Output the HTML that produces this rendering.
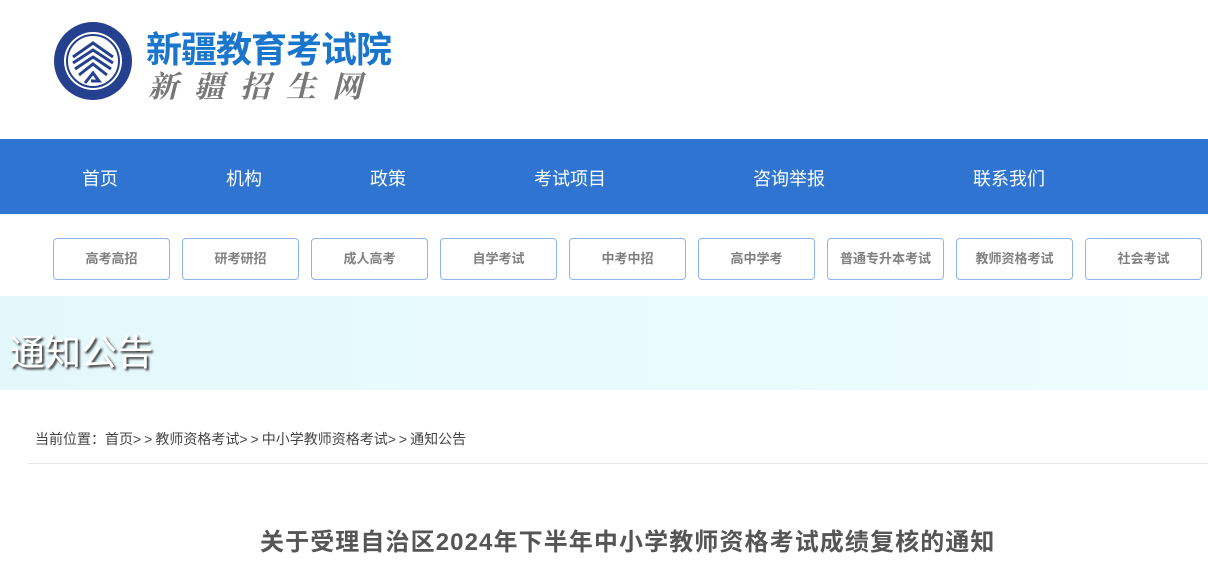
<!DOCTYPE html>
<html><head><meta charset="utf-8"><style>
body{margin:0;width:1208px;height:561px;overflow:hidden;background:#fff;font-family:"Liberation Sans","Noto Sans CJK SC",sans-serif;position:relative}
.a{position:absolute;white-space:nowrap}
.nav{position:absolute;left:0;top:139px;width:1208px;height:75px;background:#2f74d0}
.nav span{position:absolute;top:26px;color:#fff;font-size:18px;transform:translateX(-50%)}
.btn{position:absolute;top:238px;width:115px;height:40px;border:1px solid #8cb4f0;border-radius:4px;text-align:center;line-height:40px;font-size:13px;font-weight:bold;color:#808080}
.g{letter-spacing:3px}
</style></head><body>
<svg class="a" style="left:53px;top:21px" width="80" height="80" viewBox="0 0 80 80">
<circle cx="40" cy="40" r="39" fill="#24408f"/><circle cx="40" cy="40" r="29" fill="#fff"/><circle cx="40" cy="40" r="26" fill="none" stroke="#24408f" stroke-width="2"/>
<path d="M20 36 L40 22 L60 36 M20 42 L40 29 L60 42 M22 48 L40 36 L58 48 M26 54 L40 43 L54 54" fill="none" stroke="#24408f" stroke-width="3"/>
<path d="M32 62 L40 52 L46 60 L38 60" fill="none" stroke="#24408f" stroke-width="3"/>
</svg>
<div class="a" style="left:146px;top:21px;font-size:36px;font-weight:bold;color:#1a76cc;letter-spacing:-1px">新疆教育考试院</div>
<div class="a" style="left:148px;top:62px;font-size:30px;color:#777;letter-spacing:16px;font-family:'Noto Serif CJK SC',serif;font-weight:bold;font-style:italic">新疆招生网</div>
<div class="nav"><span style="left:100px">首页</span><span style="left:244px">机构</span><span style="left:388px">政策</span><span style="left:570px">考试项目</span><span style="left:789px">咨询举报</span><span style="left:1009px">联系我们</span></div>
<div class="btn" style="left:53px">高考高招</div>
<div class="btn" style="left:182px">研考研招</div>
<div class="btn" style="left:311px">成人高考</div>
<div class="btn" style="left:440px">自学考试</div>
<div class="btn" style="left:569px">中考中招</div>
<div class="btn" style="left:698px">高中学考</div>
<div class="btn" style="left:827px">普通专升本考试</div>
<div class="btn" style="left:956px">教师资格考试</div>
<div class="btn" style="left:1085px">社会考试</div>
<div class="a" style="left:0;top:296px;width:1208px;height:94px;background:linear-gradient(90deg,#e4f8fc,#eefdff)"></div>
<div class="a" style="left:9px;top:324px;font-size:36px;color:#fff;text-shadow:2px 2px 2px #333">通知公告</div>
<div class="a" style="left:35px;top:429px;font-size:14px;color:#444">当前位置：首页<span class="g">&gt;&gt;</span>教师资格考试<span class="g">&gt;&gt;</span>中小学教师资格考试<span class="g">&gt;&gt;</span>通知公告</div>
<div class="a" style="left:28px;top:463px;width:1180px;height:1px;background:#e8e8e8"></div>
<div class="a" style="left:260px;top:522px;font-size:24px;font-weight:bold;color:#555;letter-spacing:1.1px">关于受理自治区2024年下半年中小学教师资格考试成绩复核的通知</div>
</body></html>
